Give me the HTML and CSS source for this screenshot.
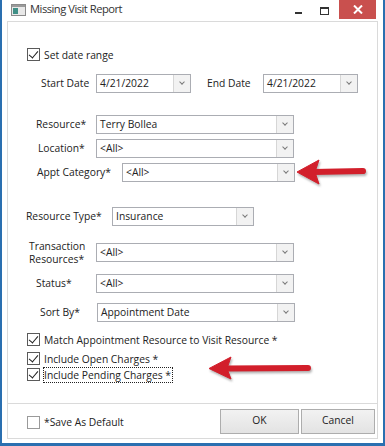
FILE: index.html
```html
<!DOCTYPE html>
<html lang="en">
<head>
  <meta charset="UTF-8">
  <title>Missing Visit Report</title>
  <link rel="stylesheet" href="styles.css">
</head>
<body>
  <div class="window">
    <div class="titlebar">
      <svg class="app-icon" width="15" height="12" viewBox="0 0 15 12">
        <rect x="0.5" y="0.5" width="14" height="11" fill="#e8e8e8" stroke="#8a8a8a"/>
        <rect x="1" y="1" width="13" height="2" fill="#9a9a9a"/>
        <rect x="2" y="4" width="5" height="6" fill="#3f8f86"/>
      </svg>
      <span class="title">Missing Visit Report</span>
      <span class="ctl ctl-min"></span>
      <span class="ctl ctl-max"></span>
      <span class="ctl ctl-close">
        <svg width="10" height="9" viewBox="0 0 10 9"><path d="M1 0.5 L9 8.5 M9 0.5 L1 8.5" stroke="#fff" stroke-width="2"/></svg>
      </span>
    </div>

    <div class="panel">
      <div class="content">
        <div class="check-row row-range"><span class="cb checked"></span>Set date range</div>

        <div class="row row-dates">
          <span class="lbl lbl-start">Start Date</span>
          <div class="combo combo-date"><span class="val">4/21/2022</span><span class="drop"></span></div>
          <span class="lbl lbl-end">End Date</span>
          <div class="combo combo-date"><span class="val">4/21/2022</span><span class="drop"></span></div>
        </div>

        <div class="row row-resource">
          <span class="lbl lbl-resource">Resource*</span>
          <div class="combo combo-wide"><span class="val">Terry Bollea</span><span class="drop"></span></div>
        </div>
        <div class="row row-location">
          <span class="lbl lbl-location">Location*</span>
          <div class="combo combo-wide"><span class="val">&lt;All&gt;</span><span class="drop"></span></div>
        </div>
        <div class="row row-appt">
          <span class="lbl lbl-appt">Appt Category*</span>
          <div class="combo combo-appt"><span class="val">&lt;All&gt;</span><span class="drop"></span></div>
        </div>

        <div class="row row-restype">
          <span class="lbl lbl-restype">Resource Type*</span>
          <div class="combo combo-restype"><span class="val">Insurance</span><span class="drop"></span></div>
        </div>
        <div class="row row-trans">
          <span class="lbl lbl-trans">Transaction<br>Resources*</span>
          <div class="combo combo-wide"><span class="val">&lt;All&gt;</span><span class="drop"></span></div>
        </div>
        <div class="row row-status">
          <span class="lbl lbl-status">Status*</span>
          <div class="combo combo-wide"><span class="val">&lt;All&gt;</span><span class="drop"></span></div>
        </div>
        <div class="row row-sort">
          <span class="lbl lbl-sort">Sort By*</span>
          <div class="combo combo-wide"><span class="val">Appointment Date</span><span class="drop"></span></div>
        </div>

        <div class="check-row row-match"><span class="cb checked"></span>Match Appointment Resource to Visit Resource *</div>
        <div class="check-row row-open"><span class="cb checked"></span>Include Open Charges *</div>
        <div class="check-row row-pending"><span class="cb checked"></span><span class="focus">Include Pending Charges *</span></div>
      </div>

      <div class="footer">
        <div class="check-row"><span class="cb cb-light"></span>*Save As Default</div>
        <div class="buttons">
          <button class="btn btn-ok">OK</button>
          <button class="btn btn-cancel">Cancel</button>
        </div>
      </div>
    </div>

    <!-- red annotation arrows -->
    <svg class="annotations" width="385" height="446" viewBox="0 0 385 446">
      <g fill="#d21f2b" stroke="#d21f2b">
        <line x1="313" y1="172" x2="363" y2="171" stroke-width="6" stroke-linecap="round"/>
        <polygon points="297,172 319,160 315,172 319,184" stroke-width="1" stroke-linejoin="round"/>
        <line x1="226" y1="368.5" x2="308" y2="368" stroke-width="6" stroke-linecap="round"/>
        <polygon points="209,368.5 231,357 227,368.5 231,379" stroke-width="1" stroke-linejoin="round"/>
      </g>
    </svg>
  </div>
</body>
</html>
```

FILE: styles.css
```css
body {
  margin: 0;
  font-family: 'Open Sans', 'Noto Sans', sans-serif;
  font-size: 10.3px;
  color: #222;
  background: #fff;
}
.window {
  position: relative;
  width: 385px;
  height: 446px;
  box-sizing: border-box;
  background: #fff;
  border-left: 2px solid #2a6fb0;
  border-right: 2px solid #2a6fb0;
  border-bottom: 3px solid #2a6fb0;
}

/* title bar */
.titlebar {
  height: 21px;
  display: flex;
  align-items: flex-start;
}
.app-icon {
  margin: 4px 0 0 9px;
}
.title {
  margin: 1px 0 0 4px;
  font-size: 11.2px;
  letter-spacing: -0.5px;
  color: #333;
}
.ctl-min {
  margin: 12px 0 0 auto;
  width: 7px;
  height: 2px;
  background: #333;
}
.ctl-max {
  margin: 7px 0 0 18px;
  width: 7px;
  height: 5px;
  border: 1px solid #333;
  border-top-width: 2px;
}
.ctl-close {
  margin: 0 7px 0 10px;
  width: 37px;
  height: 19px;
  background: #c9504e;
  display: flex;
  align-items: center;
  justify-content: center;
}

/* main panel */
.panel {
  margin: 0 5px 4px 5px;
  height: 418px;
  box-sizing: border-box;
  border: 1px solid #dadada;
  display: flex;
  flex-direction: column;
}
.content {
  flex: 1;
}
.row {
  display: flex;
  align-items: center;
  height: 19px;
}
.check-row {
  display: flex;
  align-items: center;
  height: 13px;
  padding-left: 19px;
  white-space: nowrap;
}
.cb {
  width: 11px;
  height: 11px;
  border: 1px solid #5a5a5a;
  background: #fff;
  margin-right: 4px;
  flex-shrink: 0;
  position: relative;
}
.cb.checked::after {
  content: "";
  position: absolute;
  left: 3px;
  top: 0px;
  width: 4px;
  height: 8px;
  border: solid #1e1e1e;
  border-width: 0 1.6px 1.6px 0;
  transform: rotate(40deg);
}
.cb-light {
  border-color: #9a9a9a;
}
.focus {
  outline: 1px dotted #222;
  outline-offset: 0;
  padding-right: 1px;
}

.row-range { margin-top: 26px; }
.row-dates { margin-top: 13px; }
.row-resource { margin-top: 22px; }
.row-location { margin-top: 5px; }
.row-appt { margin-top: 5px; }
.row-restype { margin-top: 25px; }
.row-trans { margin-top: 17px; }
.row-status { margin-top: 12px; }
.row-sort { margin-top: 10px; }
.row-match { margin-top: 11px; }
.row-open { margin-top: 6px; }
.row-pending { margin-top: 3px; }

.lbl {
  box-sizing: border-box;
  flex-shrink: 0;
  white-space: nowrap;
  line-height: 13px;
}
.lbl-start { width: 88px; padding-left: 33px; }
.lbl-end { width: 56px; margin-left: 16px; }
.lbl-resource { width: 88px; padding-left: 28px; }
.lbl-location { width: 88px; padding-left: 30px; }
.lbl-appt { width: 114px; padding-left: 29px; }
.lbl-restype { width: 104px; padding-left: 18px; }
.lbl-trans { width: 88px; padding-left: 21px; }
.lbl-status { width: 88px; padding-left: 28px; }
.lbl-sort { width: 89px; padding-left: 32px; }

/* combo boxes */
.combo {
  height: 19px;
  box-sizing: border-box;
  border: 1px solid #abadb3;
  background: #fff;
  display: flex;
}
.combo .val {
  flex: 1;
  padding-left: 3px;
  line-height: 17px;
  white-space: nowrap;
  overflow: hidden;
}
.combo .drop {
  width: 16px;
  border-left: 1px solid #d6d6d6;
  background: #f2f2f2;
  position: relative;
}
.combo .drop::after {
  content: "";
  position: absolute;
  left: 6px;
  top: 5px;
  width: 3px;
  height: 3px;
  border: solid #7a7a7a;
  border-width: 0 1.5px 1.5px 0;
  transform: rotate(45deg);
}
.combo-date { width: 95px; }
.combo-wide { width: 198px; }
.combo-appt { width: 173px; }
.combo-restype { width: 142px; }

/* footer */
.footer {
  height: 34px;
  border-top: 1px solid #dadada;
  display: flex;
  align-items: center;
}
.footer .check-row {
  margin-top: 2px;
}
.buttons {
  margin-left: auto;
  margin-right: 2px;
  display: flex;
  gap: 2px;
}
.btn {
  height: 25px;
  font-family: inherit;
  font-size: 10.3px;
  color: #222;
  border: 1px solid #adadad;
  background: linear-gradient(#f2f2f2, #e3e3e3);
  padding: 0 0 2px 0;
}
.btn-ok { width: 79px; }
.btn-cancel { width: 74px; }

.annotations {
  position: absolute;
  left: -2px;
  top: 0;
  pointer-events: none;
  filter: drop-shadow(1px 2px 1px rgba(0, 0, 0, 0.3));
}
```
